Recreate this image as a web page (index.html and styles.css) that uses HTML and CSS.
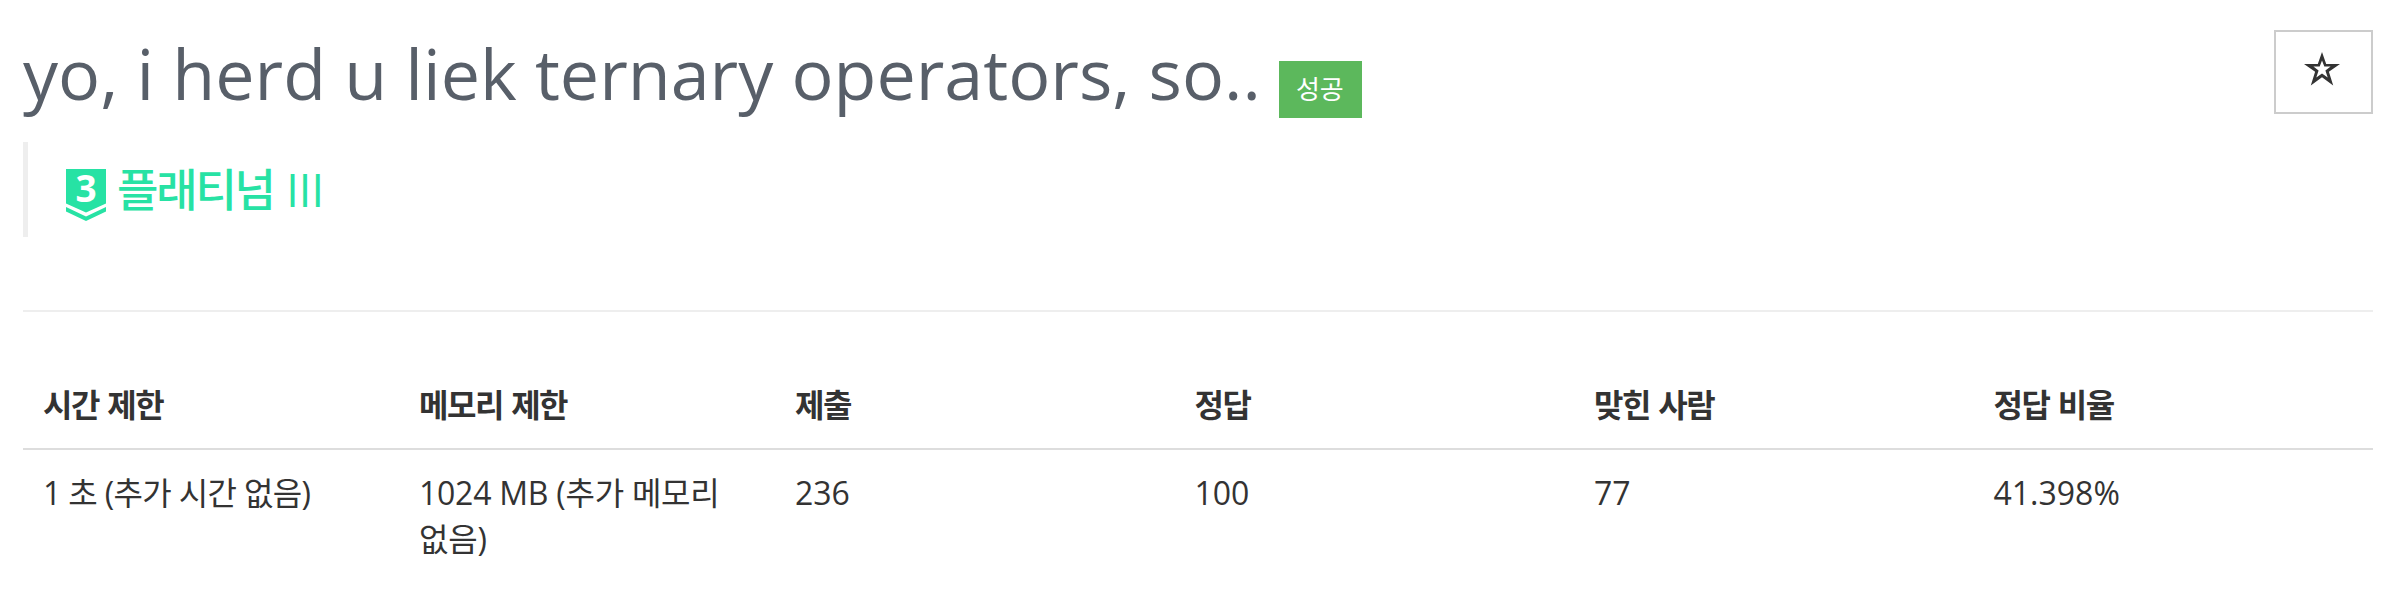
FILE: index.html
```html
<!DOCTYPE html>
<html lang="ko">
<head>
<meta charset="utf-8">
<title>yo, i herd u liek ternary operators, so..</title>
<link rel="stylesheet" href="styles.css">
</head>
<body>
<main class="page">
  <header class="headline">
    <h1 class="title">yo, i herd u liek ternary operators, so..</h1>
    <span class="label">성공</span>
    <button class="favorite" aria-label="즐겨찾기">
      <svg class="star" viewBox="0 0 36 34"><path fill-rule="evenodd" d="M18 0L22.2 12H36L24.9 19.8L29.2 33.5L18 25.3L6.8 33.5L11.1 19.8L0 12H13.8ZM18 8.5L15.7 14.6H9.4L14.6 18.4L12.3 25.6L18 21.4L23.7 25.6L21.4 18.4L26.6 14.6H20.3Z"/></svg>
    </button>
  </header>
  <blockquote class="tier">
    <svg class="tier-icon" viewBox="0 0 40 52"><path d="M0 0H40V34.5L20 43.5L0 34.5ZM0 38L20 47.5L40 38V42.5L20 52L0 42.5Z"/><text x="20" y="33" text-anchor="middle">3</text></svg>
    <span class="tier-name">플래티넘 <span class="tier-level">III</span></span>
  </blockquote>
  <hr class="rule">
  <table class="limits">
    <colgroup><col class="narrow"><col class="narrow"><col class="wide"><col class="wide"><col class="wide"><col class="wide"></colgroup>
    <thead>
      <tr><th>시간 제한</th><th>메모리 제한</th><th>제출</th><th>정답</th><th>맞힌 사람</th><th>정답 비율</th></tr>
    </thead>
    <tbody>
      <tr><td class="time">1 초 (추가 시간 없음)</td><td class="memory">1024 MB (추가 메모리 없음)</td><td>236</td><td>100</td><td>77</td><td>41.398%</td></tr>
    </tbody>
  </table>
</main>
</body>
</html>
```
FILE: styles.css
```css
* { box-sizing: border-box; }
body {
  margin: 0;
  background: #fff;
  color: #333;
  font-family: "Open Sans", "Noto Sans CJK KR", sans-serif;
  font-size: 32px;
}
.page { padding: 30px 9px 0 23px; }
.headline { display: flex; align-items: flex-start; height: 112px; }
.title {
  margin: 0;
  font-size: 70px;
  line-height: 86px;
  font-weight: 400;
  color: #585f69;
  white-space: nowrap;
}
.label {
  margin: 31px 0 0 18px;
  padding-right: 1px;
  width: 83px;
  height: 57px;
  line-height: 57px;
  text-align: center;
  font-size: 26px;
  color: #fff;
  background: #5cb85c;
}
.favorite {
  display: flex;
  justify-content: center;
  margin: 0 0 0 auto;
  padding: 20px 3px 0 0;
  width: 99px;
  height: 84px;
  border: 2px solid #ccc;
  background: #fff;
}
.star { width: 36px; height: 34px; fill: #333; }
.tier {
  display: flex;
  align-items: flex-start;
  margin: 0;
  padding: 27px 0 0 38px;
  height: 95px;
  border-left: 5px solid #eee;
}
.tier-icon { width: 40px; height: 52px; fill: #27e2a4; flex: none; overflow: visible; }
.tier-icon text { font: 700 37px/1 "Open Sans", sans-serif; fill: #fff; }
.tier-name {
  margin-left: 11px;
  font-size: 45px;
  font-weight: 500;
  line-height: 41px;
  letter-spacing: -2.2px;
  word-spacing: 3px;
  color: #27e2a4;
}
.tier-level { letter-spacing: 0; }
.rule { margin: 73px 0 60px; border: 0; height: 2px; background: #eee; }
.limits { width: 100%; table-layout: fixed; border-collapse: separate; border-spacing: 0; }
.narrow { width: 16%; }
.wide { width: 17%; }
.limits th, .limits td { padding: 10px 20px; text-align: left; vertical-align: top; line-height: 46px; word-break: keep-all; }
.limits th { height: 78px; border-bottom: 2px solid #ddd; font-weight: 700; letter-spacing: -1.5px; word-spacing: 1.5px; }
.limits td { padding-top: 20px; }
.limits .time { letter-spacing: -0.65px; }
.limits .memory { letter-spacing: -0.25px; }
```
